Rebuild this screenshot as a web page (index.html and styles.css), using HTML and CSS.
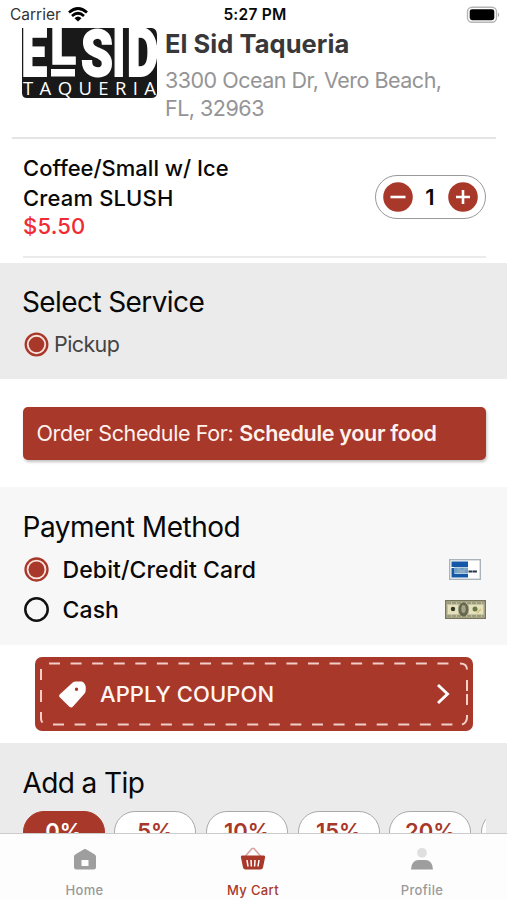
FILE: index.html
```html
<!DOCTYPE html>
<html lang="en">
<head>
<meta charset="utf-8">
<title>My Cart</title>
<link rel="stylesheet" href="styles.css">
</head>
<body>
<div class="app">
  <header class="status">
    <div class="carrier"><span>Carrier</span>
      <svg width="20" height="15" viewBox="0 0 20 15"><g fill="none" stroke="#000" stroke-width="2.7"><path d="M1 5.5Q10-2.5 19 5.5"/><path d="M4 9Q10 3.5 16 9"/></g><path d="M6.5 11.2Q10 8 13.5 11.2L10 14.6z"/></svg>
    </div>
    <span class="time">5:27 PM</span>
    <svg class="battery" width="34" height="18" viewBox="0 0 34 18"><rect x="1.5" y="1.2" width="29" height="15" rx="4.5" fill="#fff" stroke="#b5b5b5" stroke-width="1.4"/><rect x="3.7" y="3.2" width="24.6" height="11" rx="2.4"/><path d="M32 6.5q2.5 2.3 0 4.6z" fill="#aaa"/></svg>
  </header>
  <main>
    <section class="restaurant">
      <svg class="logo" width="137" height="70" viewBox="0 0 137 70">
        <path d="M1 0H131Q136 1 136 7V65Q136 70 130 70H6Q1 70 1 65z" fill="#191919"/>
        <g class="logo-big">
          <text transform="translate(.5 47.500) scale(.66 .96)">E</text>
          <text transform="translate(29.500 36) scale(.68 .75)">L</text>
          <text transform="translate(60 47.500) scale(.74 .95)">S</text>
          <text transform="translate(91.500 47.500) scale(.6 .96)">I</text>
          <text transform="translate(106 47.500) scale(.7 .96)">D</text>
        </g>
        <path d="M30 41h24v7.500h-24z" fill="#fff"/>
        <text class="logo-sub" x="2" y="67" textLength="133">TAQUERIA</text>
      </svg>
      <div class="info"><h1><span>El Sid Taqueria</span></h1><p>3300 Ocean Dr, Vero Beach,<br>FL, 32963</p></div>
    </section>
    <section class="item">
      <div class="product"><p>Coffee/Small w/ Ice<br><span class="second">Cream SLUSH</span></p><p class="price">$5.50</p></div>
      <div class="stepper">
        <svg width="30" height="30" viewBox="0 0 30 30"><circle cx="15" cy="15" r="14.8"/><path d="M7.500 15h15"/></svg>
        <b>1</b>
        <svg width="30" height="30" viewBox="0 0 30 30"><circle cx="15" cy="15" r="14.8"/><path d="M8 15h14M15 8v14"/></svg>
      </div>
    </section>
    <section class="service">
      <h2 class="t-service">Select Service</h2>
      <div class="choice"><svg class="radio on" width="25" height="25" viewBox="0 0 25 25"><circle cx="12.500" cy="12.500" r="10.800"/><circle class="dot" cx="12.500" cy="12.500" r="7.800"/></svg><span>Pickup</span></div>
    </section>
    <section class="schedule"><div class="schedule-btn"><span class="sched-label">Order Schedule For:</span><b>Schedule your food</b></div></section>
    <section class="payment">
      <h2 class="t-pay">Payment Method</h2>
      <div class="method"><svg class="radio on" width="25" height="25" viewBox="0 0 25 25"><circle cx="12.500" cy="12.500" r="11"/><circle class="dot" cx="12.500" cy="12.500" r="8"/></svg><span class="debit">Debit/Credit Card</span>
        <svg class="card" width="32" height="21" viewBox="0 0 32 21"><rect x=".7" y=".7" width="30.6" height="19.6" fill="#fff" stroke="#a9b3b9" stroke-width="1.4"/><path d="M2.500 2.500h16.500v5.500H2.500zM2.500 9h3v6h13.500v3.500H2.500z" fill="#1558a7"/><path d="M5 8.500h14v6H5z" fill="#6f9fc6"/><path d="M8 10h3v2h4v-2h3M8 13h8" fill="none" stroke="#9db4c4"/><path d="M19.500 12.500h8.500" stroke="#253346" stroke-width="2" stroke-dasharray="4 .4"/></svg>
      </div>
      <div class="method"><svg class="radio" width="25" height="25" viewBox="0 0 25 25"><circle cx="12.500" cy="12.500" r="11.200"/></svg><span class="cash">Cash</span>
        <svg class="bill" width="41" height="19" viewBox="0 0 41 19"><rect x=".7" y=".7" width="39.6" height="17.6" fill="#c3c1a0" stroke="#77765a" stroke-width="1.4"/><path d="M2 3h37M2 16h37" stroke="#74775b" stroke-dasharray="4 1"/><path d="M3 5h10v9H3zM24 5h14v9H24z" fill="#e6e1bb"/><ellipse cx="18.500" cy="9.500" rx="5" ry="7" fill="#66674f"/><ellipse cx="18.500" cy="9" rx="2.200" ry="4" fill="#a5a487"/><circle cx="8" cy="9" r="2.200" fill="#30382c"/><circle cx="30" cy="9" r="2.500" fill="#657b47"/><path d="M32 13l4-4" stroke="#d9c689" stroke-width="2"/></svg>
      </div>
    </section>
    <section class="coupon-wrap"><div class="coupon">
      <svg class="dashes" width="438" height="73" viewBox="0 0 438 73"><g fill="none" stroke="#ffe9e4" stroke-opacity=".85" stroke-width="2"><path d="M14 6.500H417" stroke-dasharray="11 10.58"/><path d="M18 67.600H419" stroke-dasharray="11 10.58"/><path d="M6 12v11M6 33v12M6 55v7q0 2 1.500 3.500M425 6.500q7 0 7 6M432 23v11M432 37v11M432 58v2q0 6-5 7.500"/></g></svg>
      <svg class="tag" width="27" height="27" viewBox="0 0 27 27"><path fill="#fff" fill-rule="evenodd" d="M14 1.300Q15 .4 17 .5H22.500Q24 .6 25 2L26.200 4Q27 5.500 26.700 9Q26.800 11 25.600 12.500L14 25.600Q12.300 27.400 10.400 25.700L1 16.600Q-.7 15 .9 13.300zM17.500 6.500a1.700 1.700 0 1 0 0 3.400a1.700 1.700 0 1 0 0-3.400z"/></svg>
      <span>APPLY COUPON</span>
      <svg class="chevron" width="14" height="22" viewBox="0 0 14 22"><path d="M2 2l9.500 9L2 20" fill="none" stroke="#fff" stroke-width="2.900"/></svg>
    </div></section>
    <section class="tip"><h2 class="t-tip">Add a Tip</h2>
      <div class="tips"><span class="active">0%</span><span>5%</span><span>10%</span><span>15%</span><span>20%</span><span></span></div>
    </section>
  </main>
  <nav>
    <div><svg width="24" height="24" viewBox="0 0 24 24"><path fill="#9e9e9e" fill-rule="evenodd" d="M11 2.300q1-.6 2 0l8.800 5.200q1.200.8 1.200 2V20q0 2.500-2.500 2.500h-17Q1 22.500 1 20V9.500q0-1.200 1.200-2zM8.500 13v6h7v-6z"/></svg><span class="n-home">Home</span></div>
    <div class="selected"><svg width="26" height="24" viewBox="0 0 26 24"><path d="M5.500 9L12 1.500h2L20.500 9" fill="none" stroke="#dba59e" stroke-width="1.600"/><path d="M2 8.500h22q1.500.4 1 2.300l-2 9.700q-.5 2-2.500 2h-15q-2 0-2.500-2l-2-9.700q-.5-1.900 1-2.300z" fill="#a83829"/><path d="M7 13l1 6.500M11 13l.4 6.500M15 13l-.4 6.500M19 13l-1 6.500" stroke="#fff" stroke-width="1.500"/></svg><span class="n-cart">My Cart</span></div>
    <div><svg width="24" height="24" viewBox="0 0 24 24"><circle cx="12" cy="5.800" r="4.900" fill="#dfdfdf"/><path d="M1 22.500Q1.400 13 9 13h6q7.600 0 8 9.500z" fill="#9e9e9e"/></svg><span class="n-prof">Profile</span></div>
  </nav>
</div>
</body>
</html>
```
FILE: styles.css
```css
*{box-sizing:border-box}
body{margin:0;background:#fff;color:#080808;font-family:Inter,"Liberation Sans",sans-serif}
h1,h2,p{margin:0}
svg{display:block;flex:none}
span,b{white-space:nowrap}
.app{width:507px;height:900px;overflow:hidden;display:flex;flex-direction:column}
.status{height:28px;flex:none;display:grid;grid-template-columns:1fr auto 1fr;align-items:center;padding:1px 7px 0 10px;font-size:15.500px}
.carrier{display:flex;align-items:center;gap:7px;color:#333}
.time{font-weight:600;letter-spacing:.25px;font-size:15.500px}
.battery{justify-self:end}
main{flex:1;min-height:0;overflow:hidden}
.restaurant{height:111px;margin:0 11px 0 12px;padding-left:9px;border-bottom:2px solid #e4e4e4;display:flex;gap:7px}
.logo-big{font:900 69px Roboto,sans-serif;fill:#fff;stroke:#fff;stroke-width:2px}
.logo-sub{font:400 18.500px "Open Sans",sans-serif;fill:#fff}
.info h1{font-size:25.500px;line-height:32px;font-weight:700;color:#38383a;letter-spacing:.05px}
.info p{font-size:21.500px;line-height:28px;color:#949496;margin-top:6px;letter-spacing:-.5px}
.item{height:119px;margin:0 21px 0 23px;border-bottom:2px solid #ebebeb;display:flex;justify-content:space-between;align-items:center;padding-bottom:2px}
.product{font-size:22px;line-height:29.500px;font-weight:500}
.product .second{letter-spacing:.15px}
.product .price{color:#f02b33;line-height:26px;letter-spacing:.2px}
.stepper{width:111px;height:44px;border:1.500px solid #999;border-radius:22px;display:flex;align-items:center;justify-content:space-between;padding:0 7px;margin-right:.5px}
.stepper b{font-size:22px;font-weight:600}
.stepper circle{fill:#a83829}
.stepper path{stroke:#fff;stroke-width:2.600}
h2{font-size:28px;line-height:36px;font-weight:400;letter-spacing:-.6px}
.t-pay{letter-spacing:-.5px}
.service{height:116px;margin-top:5px;background:#ebebeb;padding:21px 22px 0}
.choice{height:30px;margin-top:9px;display:flex;align-items:center;gap:5px;padding-left:2px;color:#444;font-size:21.500px;letter-spacing:-.6px}
.radio circle{fill:none;stroke:#111;stroke-width:2.500px}
.radio.on circle{fill:#f8e2dd;stroke:#a83829;stroke-width:2.300px}
.radio.on .dot{fill:#a83829;stroke:none}
.schedule{height:108px;padding:28px 21px 26px 22.500px}
.schedule-btn{height:53px;border-radius:5px;background:#a83829;box-shadow:1px 2px 3px #9999;color:#fff2ee;display:flex;align-items:center;gap:6px;padding:0 0 2px 14px;font-size:21.500px}
.sched-label{letter-spacing:-.38px}
.schedule-btn b{font-weight:600;letter-spacing:-.3px}
.payment{height:158px;background:#f7f7f7;padding:22px 21px 0 22.500px}
.payment h2{margin-bottom:4.500px}
.method{height:40px;display:flex;align-items:center;padding-left:1px;font-size:23px;font-weight:500}
.method span{margin-left:14px;letter-spacing:.1px}
.card{margin-left:auto;margin-right:5px}
.bill{margin-left:auto}
.coupon-wrap{height:98px;padding:12px 34px 0 35px}
.coupon{height:74px;border-radius:7px;background:#a83829;color:#fff6f3;display:flex;align-items:center;padding:0 23px 0 24px;font-size:22px;font-weight:500;position:relative}
.dashes{position:absolute;left:0;top:0}
.coupon span{margin-left:14px;letter-spacing:.08px}
.chevron{margin-left:auto}
.tip{height:150px;background:#ebebeb;padding:22px 21px 0 22.500px}
.tips{display:flex;gap:9.700px;margin-top:10px;overflow:hidden}
.tips span{width:82px;height:42px;flex:none;border:1.500px solid #aaa;border-radius:21px;background:#fff;color:#a83829;text-align:center;font-size:22px;line-height:38px;font-weight:600}
.tips .active{background:#a83829;border-color:#a83829;color:#fff}
nav{height:67px;flex:none;border-top:1.500px solid #ccc;background:#fdfdfd;display:grid;grid-template-columns:169px 1fr 170px;font-size:13px;font-weight:500;color:#999}
nav div{display:flex;flex-direction:column;align-items:center;padding-top:13px}
nav span{margin-top:11px;line-height:16px;letter-spacing:.35px}
.selected{color:#a83829}
```
